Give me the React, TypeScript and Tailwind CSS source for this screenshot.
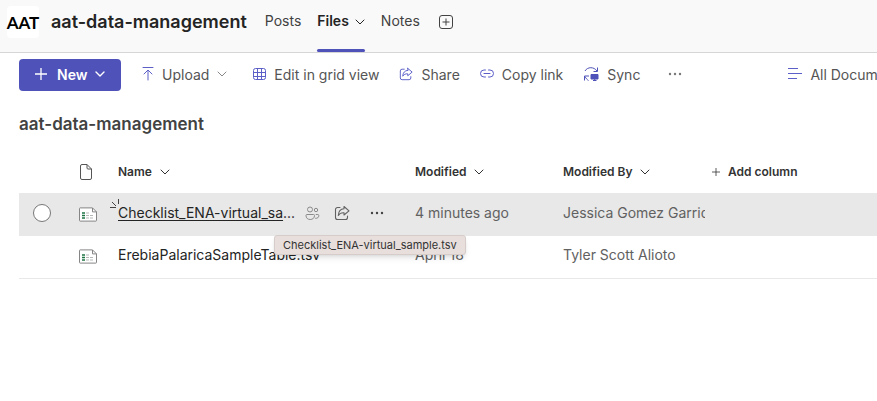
import React from "react";

type IconProps = { className?: string };

const Chevron = ({ className = "" }: IconProps) => (
  <svg className={`h-[10px] w-[10px] shrink-0 ${className}`} viewBox="0 0 10 10" fill="none" stroke="currentColor" strokeLinecap="round" strokeLinejoin="round" aria-hidden="true">
    <path d="M1 3l4 4 4-4" />
  </svg>
);

const Dots = ({ className = "" }: IconProps) => (
  <svg className={`h-4 w-[14px] shrink-0 ${className}`} viewBox="0 0 14 16" fill="currentColor" aria-hidden="true">
    <circle cx="2" cy="8" r="1.2" />
    <circle cx="7" cy="8" r="1.2" />
    <circle cx="12" cy="8" r="1.2" />
  </svg>
);

const ShareIcon = ({ className = "" }: IconProps) => (
  <svg className={`shrink-0 ${className}`} viewBox="0 0 16 16" fill="none" stroke="currentColor" strokeWidth="1.1" strokeLinecap="round" strokeLinejoin="round" aria-hidden="true">
    <path d="M6 2.5H3.5a2 2 0 0 0-2 2v8a2 2 0 0 0 2 2h8a2 2 0 0 0 2-2V11" />
    <path d="M10 1.5l5 4.3L10 10V7.8C7.3 7.6 5.6 8.5 4.3 10.5 4.5 6.5 6.5 4 10 3.8z" />
  </svg>
);

const UploadIcon = () => (
  <svg className="h-4 w-3 shrink-0 text-[#5b5fc7]" viewBox="0 0 12 16" fill="none" stroke="currentColor" strokeLinecap="round" strokeLinejoin="round" aria-hidden="true">
    <path d="M1 1.5h10M6 14V4.500M2 8l4-4 4 4" />
  </svg>
);

const GridIcon = () => (
  <svg className="h-[14px] w-[14px] shrink-0 text-[#5b5fc7]" viewBox="0 0 14 14" fill="none" stroke="currentColor" aria-hidden="true">
    <rect x="1.5" y="1.5" width="12" height="11" rx="2" />
    <path d="M5.5 1.5v11M9.5 1.5v11M1.5 5.5h12M1.5 9.5h12" />
  </svg>
);

const LinkIcon = () => (
  <svg className="h-[14px] w-[14px] shrink-0 text-[#5b5fc7]" viewBox="0 0 14 14" fill="none" stroke="currentColor" strokeLinecap="round" aria-hidden="true">
    <path d="M5.500 3H4a3.500 3.500 0 0 0 0 7h1.500M8.500 3H10a3.500 3.500 0 0 1 0 7H8.500M4 6.500h6" />
  </svg>
);

const SyncIcon = () => (
  <svg className="h-4 w-4 shrink-0 text-[#4f52b8]" viewBox="0 0 16 16" fill="none" stroke="currentColor" aria-hidden="true">
    <path d="M2 5C4.500 .6 11 .6 14 5M14.500 1.500v4h-4M1.500 14.500v-4.500h4.500M2 10.500C3 12.500 4 13.500 5.500 14.500" />
    <path d="M8 8.500h7v4.500H8zM10 14.500h3.500M11.700 13v1.500" fill="currentColor" />
  </svg>
);

const ViewIcon = () => (
  <svg className="h-[14px] w-[15px] shrink-0 text-[#5b5fc7]" viewBox="0 0 15 14" fill="none" stroke="currentColor" aria-hidden="true">
    <path d="M1 1.500h10M1 6.500h14M1 11.500h9" />
  </svg>
);

const PeopleIcon = () => (
  <svg className="h-[14px] w-[15px] shrink-0 text-[#8a8a8a]" viewBox="0 0 15 14" fill="none" stroke="currentColor" aria-hidden="true">
    <circle cx="5" cy="3.500" r="2.500" />
    <circle cx="11" cy="4" r="1.700" />
    <path d="M2 8.500h6.500a1 1 0 0 1 1 1c0 2.500-1.800 4-4.300 4S1 12 1 9.500a1 1 0 0 1 1-1zM10.800 8.500h2a1 1 0 0 1 1 1c0 2-1.300 3-3.600 2.800" />
  </svg>
);

const PageIcon = () => (
  <svg className="block h-4 w-[14px] text-[#555]" viewBox="0 0 14 16" fill="none" stroke="currentColor" strokeLinejoin="round" aria-hidden="true">
    <path d="M3 .5H8L12.500 5v9a1.500 1.500 0 0 1-1.500 1.500H3A1.500 1.500 0 0 1 1.500 14V2A1.500 1.500 0 0 1 3 .5zM8 .5V4a1 1 0 0 0 1 1h3.500" />
  </svg>
);

const SheetIcon = () => (
  <svg className="block h-[15px] w-[18px]" viewBox="0 0 18 15" fill="none" aria-hidden="true">
    <path d="M.5 1.500a.6.6 0 0 1 .6-.6h12.400l4 4v8.600a.6.6 0 0 1-.6.6H1.100a.6.6 0 0 1-.6-.6z" fill="#fff" stroke="#858585" />
    <path d="M13.500 1v3.900h4" stroke="#858585" />
    <path d="M3 6h3M3 8.500h3M3 11h3" stroke="#1e7544" strokeWidth="1.300" />
    <path d="M7 6h3M7 8.500h3M7 11h3M11 8.500h3M11 11h3" stroke="#b4b9b6" />
  </svg>
);

const Glimmer = () => (
  <svg className="absolute -left-2 -top-1 h-[11px] w-[10px] text-[#444]" viewBox="0 0 10 11" fill="none" stroke="currentColor" aria-hidden="true">
    <path d="M8.500 0v5M2 3l4 4M0 8.500h6" />
  </svg>
);

function Header() {
  return (
    <header className="flex h-[53px] items-start border-b border-[#d6d6d6] bg-[#f9f9f9] pl-[7px]">
      <div className="mt-[6px] flex h-8 w-8 shrink-0 items-end justify-center rounded bg-white font-['Lato',sans-serif] text-[17px] font-bold leading-[30px] text-black">
        AAT
      </div>
      <h1 className="ml-3 mt-[10px] text-[18px] font-semibold leading-6 text-[#242424]">aat-data-management</h1>
      <nav aria-label="Channel tabs" className="ml-[18px] flex h-[52px] items-start text-[14px] leading-[42px] text-[#424242]">
        <a href="#posts">Posts</a>
        <a href="#files" aria-current="page" className="ml-4 flex h-[52px] flex-col justify-between font-semibold text-[#242424]">
          <span className="flex items-center gap-[6px]">
            Files
            <Chevron className="mt-[2px]" />
          </span>
          <span className="h-[3px] rounded-sm bg-[#4f52b8]" />
        </a>
        <a href="#notes" className="ml-4">Notes</a>
        <button type="button" aria-label="Add a tab" className="ml-[18px] mt-[14px]">
          <svg className="h-4 w-4" viewBox="0 0 16 16" fill="none" stroke="#424242" aria-hidden="true">
            <rect x="1.500" y="1.500" width="13" height="13" rx="2.500" />
            <path d="M8 4.500v7M4.500 8h7" />
          </svg>
        </button>
      </nav>
    </header>
  );
}

const command = "flex h-8 shrink-0 items-center gap-2 pb-[2px]";

function Toolbar() {
  return (
    <div role="toolbar" aria-label="File commands" className="flex items-center overflow-hidden pl-[19px] pt-[6px] text-[14px] text-[#555]">
      <button type="button" className="flex h-8 w-[102px] shrink-0 items-center rounded-sm bg-[#4f52b8] pb-[2px] pl-4 font-semibold text-white">
        <svg className="h-3 w-3" viewBox="0 0 12 12" stroke="currentColor" strokeWidth="1.300" aria-hidden="true">
          <path d="M6 0v12M0 6h12" />
        </svg>
        <span className="ml-[10px]">New</span>
        <Chevron className="ml-2 stroke-[1.4]" />
      </button>
      <button type="button" className={`${command} ml-[21px]`}>
        <UploadIcon />
        Upload
        <Chevron className="text-[#888]" />
      </button>
      <button type="button" className={`${command} ml-[25px]`}><GridIcon />Edit in grid view</button>
      <button type="button" className={`${command} ml-5`}><ShareIcon className="h-[14px] w-[14px] text-[#5b5fc7]" />Share</button>
      <button type="button" className={`${command} ml-5`}><LinkIcon />Copy link</button>
      <button type="button" className={`${command} ml-5`}><SyncIcon />Sync</button>
      <button type="button" aria-label="More commands" className={`${command} ml-7 text-[#777]`}><Dots /></button>
      <button type="button" className={`${command} ml-[105px]`}><ViewIcon />All Documents</button>
    </div>
  );
}

const sortButton = "flex items-center gap-2";

function Files() {
  return (
    <table className="w-full table-fixed border-collapse whitespace-nowrap text-left text-[14px] text-[#616161]">
      <colgroup>
        <col className="w-[60px]" />
        <col className="w-[39px]" />
        <col className="w-[297px]" />
        <col className="w-[148px]" />
        <col className="w-[149px]" />
        <col />
      </colgroup>
      <thead className="text-[12px] text-[#333]">
        <tr className="h-[43px]">
          <td />
          <th scope="col" aria-label="File type"><PageIcon /></th>
          <th scope="col" className="font-semibold"><button type="button" className={sortButton}>Name<Chevron /></button></th>
          <th scope="col" className="font-semibold"><button type="button" className={sortButton}>Modified<Chevron /></button></th>
          <th scope="col" className="font-semibold"><button type="button" className={sortButton}>Modified By<Chevron /></button></th>
          <th scope="col" className="font-semibold">
            <button type="button" className={sortButton}>
              <svg className="h-2 w-2" viewBox="0 0 8 8" stroke="currentColor" strokeWidth=".8" aria-hidden="true"><path d="M4 0v8M0 4h8" /></svg>
              Add column
            </button>
          </th>
        </tr>
      </thead>
      <tbody>
        <tr className="h-[43px] bg-[#e8e8e8]">
          <td>
            <input type="radio" aria-label="Select Checklist_ENA-virtual_sample.tsv" className="mb-1 ml-[14px] block h-[18px] w-[18px] appearance-none rounded-full border border-[#777] bg-white" />
          </td>
          <td><SheetIcon /></td>
          <td className="pb-1">
            <div className="relative flex items-center leading-5 text-[#242424]">
              <Glimmer />
              <a href="#checklist" className="w-[174px]">
                <span className="underline underline-offset-2">Checklist_ENA-virtual_sa</span>...
              </a>
              <span className="ml-[13px]"><PeopleIcon /></span>
              <button type="button" aria-label="Share" className="ml-[14px]"><ShareIcon className="h-4 w-4 text-[#616161]" /></button>
              <button type="button" aria-label="More actions" className="ml-5"><Dots className="text-[#424242]" /></button>
              <div role="tooltip" className="absolute left-[156px] top-8 z-10 rounded-[3px] border border-[#d6cdcb] bg-[#e8dfdd] px-2 text-[11px] leading-[18px] text-[#333] shadow-md">
                Checklist_ENA-virtual_sample.tsv
              </div>
            </div>
          </td>
          <td className="pb-1">4 minutes ago</td>
          <td className="pb-1"><div className="mr-[7px] overflow-hidden">Jessica Gomez Garrido</div></td>
          <td />
        </tr>
        <tr className="h-[42px] border-b border-[#e8e8e8]">
          <td />
          <td><SheetIcon /></td>
          <td className="pb-1"><a href="#erebia" className="text-[#242424]">ErebiaPalaricaSampleTable.tsv</a></td>
          <td className="pb-1">April 18</td>
          <td className="pb-1">Tyler Scott Alioto</td>
          <td />
        </tr>
      </tbody>
    </table>
  );
}

export default function App() {
  return (
    <div className="min-h-screen bg-white font-['Inter','Liberation_Sans',sans-serif]">
      <Header />
      <main>
        <Toolbar />
        <div className="pl-[19px]">
          <h2 className="pb-[14px] pt-[21px] text-[17px] font-semibold leading-6 text-[#424242]">aat-data-management</h2>
          <Files />
        </div>
      </main>
    </div>
  );
}
